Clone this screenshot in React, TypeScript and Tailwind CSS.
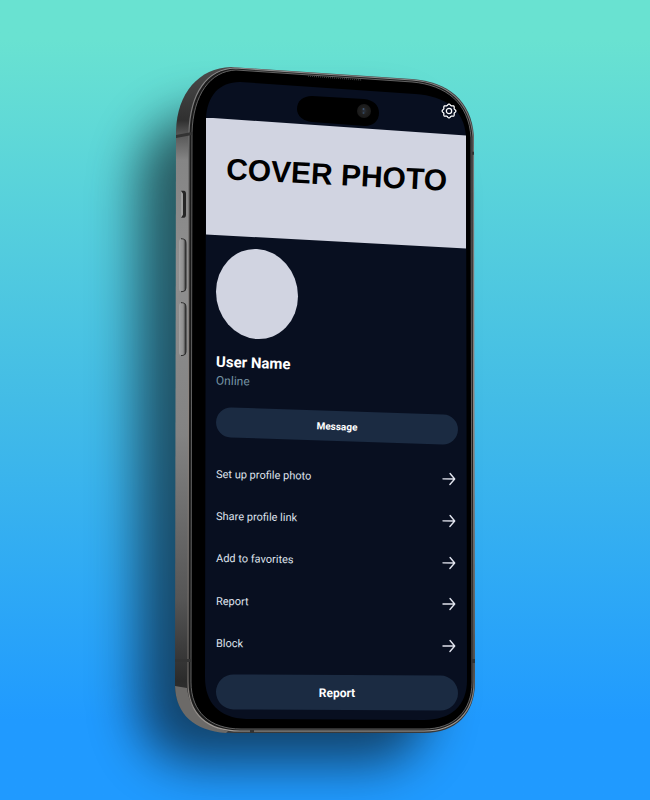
import React from "react";

type Item = { label: string; tilt: string };

const items: Item[] = [
  { label: "Set up profile photo", tilt: "rotate-[1deg]" },
  { label: "Share profile link", tilt: "rotate-[1deg]" },
  { label: "Add to favorites", tilt: "rotate-[1deg]" },
  { label: "Report", tilt: "rotate-[0.5deg]" },
  { label: "Block", tilt: "rotate-[0.5deg]" },
];

// Eight-lobed outline of the settings gear.
const gearPath =
  Array.from({ length: 96 }, (_, i) => {
    const a = (i / 96) * Math.PI * 2;
    const r = 9.4 + 0.9 * Math.cos(8 * a);
    return `${i ? "L" : "M"}${(12 + r * Math.sin(a)).toFixed(2)} ${(12 - r * Math.cos(a)).toFixed(2)}`;
  }).join("") + "Z";

function GearIcon() {
  return (
    <svg viewBox="0 0 24 24" className="size-4" fill="none" stroke="currentColor" strokeWidth="1.900" strokeLinejoin="round" aria-hidden="true">
      <path d={gearPath} />
      <circle cx="12" cy="12" r="4" />
    </svg>
  );
}

function ArrowIcon() {
  return (
    <svg viewBox="0 0 14 14" className="size-[14px]" fill="none" stroke="currentColor" strokeWidth="1.400" strokeLinecap="round" strokeLinejoin="round" aria-hidden="true">
      <path d="M1 7H12.500M8 1.500L12.700 7L8 12.500" />
    </svg>
  );
}

function PhoneFrame() {
  return (
    <svg viewBox="175 66 300 668" preserveAspectRatio="none" className="absolute inset-0 h-full w-full overflow-visible" aria-hidden="true">
      <defs>
        <linearGradient id="side" x1="0" y1="66" x2="0" y2="734" gradientUnits="userSpaceOnUse">
          <stop offset="0" stopColor="#4b4b4b" />
          <stop offset="0.08" stopColor="#303030" />
          <stop offset="0.1" stopColor="#555" />
          <stop offset="0.14" stopColor="#858585" />
          <stop offset="0.3" stopColor="#8f8f8f" />
          <stop offset="0.55" stopColor="#838383" />
          <stop offset="0.8" stopColor="#555" />
          <stop offset="0.92" stopColor="#2b2b2b" />
          <stop offset="1" stopColor="#3a3a3a" />
        </linearGradient>
        <linearGradient id="rim" x1="0" y1="66" x2="0" y2="734" gradientUnits="userSpaceOnUse">
          <stop offset="0" stopColor="#8c8c8c" />
          <stop offset="0.12" stopColor="#6a6a6a" />
          <stop offset="0.5" stopColor="#8d8580" />
          <stop offset="0.9" stopColor="#6a6663" />
          <stop offset="1" stopColor="#a5a09c" />
        </linearGradient>
        <linearGradient id="key" x1="0" x2="1">
          <stop offset="0" stopColor="#a2a2a2" />
          <stop offset="0.6" stopColor="#8f8f8f" />
          <stop offset="1" stopColor="#2c2c2c" />
        </linearGradient>
        <radialGradient id="lens">
          <stop offset="0" stopColor="#2a3340" />
          <stop offset="0.4" stopColor="#222" />
          <stop offset="1" stopColor="#191919" />
        </radialGradient>
        <filter id="soft" x="-40%" y="-25%" width="180%" height="150%" colorInterpolationFilters="sRGB">
          <feGaussianBlur stdDeviation="25" />
        </filter>
      </defs>

      <path
        d="M138 190C138 140 164 114 204 114H380C412 114 428 150 428 190V700C428 740 404 764 370 764H200C160 764 138 740 138 700Z"
        fill="#0a141c"
        opacity="0.64"
        filter="url(#soft)"
      />

      {/* body */}
      <path
        d="M176 130C177 92 199 67 231 66L412 78C448 81 471 99 474 135L475 682C475 714 456 733 424 733L235 733C199 733 176 716 175 686Z"
        fill="url(#side)"
      />
      <path d="M175 686L187 688C190 712 206 726 228 731L226 733C195 731 176 715 175 686Z" fill="#6c6a68" />
      {/* rim */}
      <path
        d="M189 132C190 92 207 68 235 67L412 79C447 82 470 100 473 136L474 682C474 713 455 731 424 731L240 731C207 731 188 714 188 682Z"
        fill="#1c1c1c"
        stroke="url(#rim)"
        strokeWidth="1.200"
      />
      <path
        d="M192 132C193 94 210 70 236 69L412 81C446 84 469 102 471 137L472 682C472 711 454 729 424 729L241 729C210 729 191 712 191 682Z"
        fill="#000"
        stroke="#777"
        strokeWidth="0.8"
      />
      <path d="M176 134L192 131V134L176 137ZM175 659H191V662H175ZM472 151H474V154H472ZM472 659H475V663H472ZM250 730H254V733H250Z" fill="#333" />
      <path d="M308 75L362 79" stroke="#3a3a3a" strokeWidth="1.500" strokeDasharray="1 1" />

      {/* side keys */}
      <path d="M181 191H184V217H181Z" fill="#a0a0a0" />
      <path d="M181 190H184C185 190 186 191 186 193V214C186 216 185 217 184 217H181L183 214V193Z" fill="#262626" />
      <rect x="179" y="238" width="7" height="53" rx="3" fill="url(#key)" />
      <path d="M181 238C185 238 186 240 186 243V286C186 290 184 291 181 291" fill="none" stroke="#2a2a2a" />
      <rect x="179" y="302" width="7" height="53" rx="3" fill="url(#key)" />
      <path d="M181 302C185 302 186 304 186 307V350C186 354 184 355 181 355" fill="none" stroke="#2a2a2a" />

      {/* display */}
      <path
        d="M206 118C207 95 219 81 240 81L415 93C446 95 464 109 466 135L467 680C467 706 451 720 424 720L246 719C219 718 205 703 205 677Z"
        fill="#080f20"
      />
      {/* camera island */}
      <path d="M312 95L364 98C373 99 379 104 379 112C379 120 373 125 365 125L312 121C303 120 297 115 297 108C297 100 303 95 312 95Z" fill="#000" />
      <circle cx="364" cy="110" r="7" fill="url(#lens)" />
      <circle cx="363.500" cy="108" r="1" fill="#3f5673" />
      <circle cx="363.500" cy="112" r="1" fill="#34485f" />
    </svg>
  );
}

export default function App() {
  return (
    <main className="flex min-h-screen items-center justify-center overflow-hidden bg-linear-to-b from-[#69e2d1] from-5% via-[#43bce6] via-50% to-[#209aff] to-90% font-[Roboto,sans-serif]">
      <div className="relative w-[300px]">
        <PhoneFrame />
        <div className="relative pr-[9px] pb-6 pl-[31px] text-[#dfe2ec]">
          <header className="flex h-[51px] items-end justify-end pr-[9px]">
            <button type="button" aria-label="Settings" className="-mb-px text-white">
              <GearIcon />
            </button>
          </header>

          <section className="flex h-[131px] items-center justify-center bg-[#d1d4e1] pb-4 pl-0.5 [clip-path:polygon(0_0,100%_18px,100%_100%,0_calc(100%_-_14px))]">
            <h1 className="rotate-[3deg] font-['Liberation_Sans',sans-serif] text-[30px] leading-none font-bold whitespace-nowrap text-black">
              COVER PHOTO
            </h1>
          </section>

          <div className="pr-2 pl-[10px]">
            <div className="h-[90px] w-[82px] skew-y-3 rounded-[50%] bg-[#d1d4e1]" />
            <h2 className="mt-[14px] w-fit rotate-[2deg] text-[15px] leading-5 font-bold text-white">User Name</h2>
            <p className="w-fit rotate-[2deg] text-[12px] leading-4 text-[#7593a3]">Online</p>

            <button type="button" className="mt-[22px] block h-[30px] w-full rotate-[1.9deg] rounded-full bg-[#1b2b42] text-[10px] font-bold text-white">
              Message
            </button>

            <ul className="mt-[15px] text-[11px]">
              {items.map((item) => (
                <li key={item.label}>
                  <button type="button" className={`flex h-[42px] w-full items-center justify-between pr-[2px] ${item.tilt}`}>
                    {item.label}
                    <ArrowIcon />
                  </button>
                </li>
              ))}
            </ul>

            <button type="button" className="mt-[9px] block h-[35px] w-full rotate-[0.3deg] rounded-full bg-[#1b2b42] text-[12px] font-bold text-white">
              Report
            </button>
          </div>
        </div>
      </div>
    </main>
  );
}
